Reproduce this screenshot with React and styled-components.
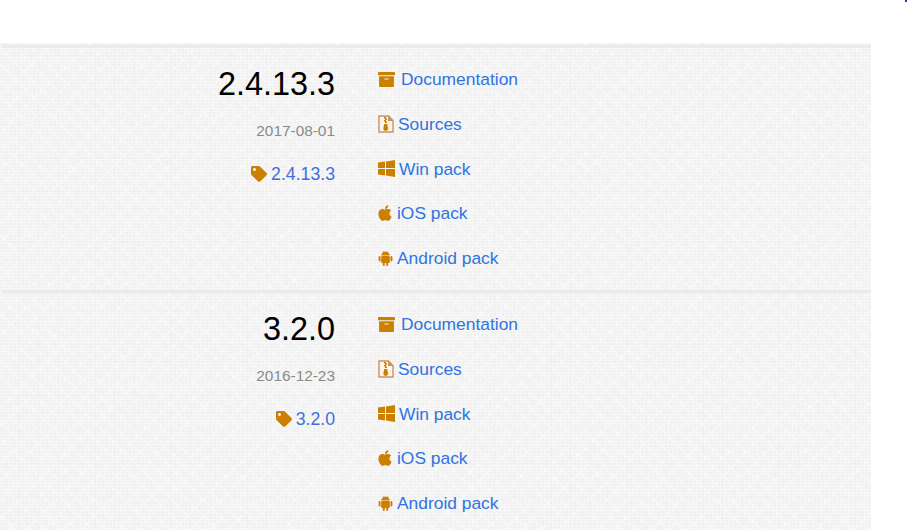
import React from "react";
import styled, { createGlobalStyle } from "styled-components";
import { FaArchive, FaApple, FaTag } from "react-icons/fa";

const GlobalStyle = createGlobalStyle`
  html, body {
    margin: 0;
    padding: 0;
    height: 100%;
    overflow: hidden;
    background: #fff;
    font-family: "Liberation Sans", Arial, sans-serif;
  }
`;

const Page = styled.div`
  padding-top: 43px;
  width: 871px;
`;

const Speck = styled.i`
  position: absolute;
  top: 0;
  left: 905px;
  width: 2px;
  height: 2px;
  background: #3030c0;
`;

const Panel = styled.section`
  height: 487px;
  overflow: hidden;
  padding-top: 2px;
  background-color: #f1f1f1;
  background-image:
    repeating-linear-gradient(0deg, rgba(255, 255, 255, 0.35) 0 1px, transparent 1px 3px),
    repeating-linear-gradient(90deg, rgba(255, 255, 255, 0.3) 0 1px, transparent 1px 4px),
    repeating-linear-gradient(0deg, rgba(232, 232, 232, 0.3) 0 1px, transparent 1px 17px),
    repeating-linear-gradient(90deg, rgba(232, 232, 232, 0.3) 0 1px, transparent 1px 19px),
    repeating-linear-gradient(45deg, rgba(255, 255, 255, 0.3) 0 2px, transparent 2px 11px),
    repeating-linear-gradient(-45deg, rgba(255, 255, 255, 0.25) 0 2px, transparent 2px 13px);
`;

const Release = styled.article`
  display: grid;
  grid-template-columns: 333px 1fr;
  column-gap: 43px;
  height: 242px;
  margin-left: 2px;
  border-top: 3px solid #ebebeb;
`;

const Meta = styled.div`
  display: flex;
  flex-direction: column;
  align-items: flex-end;
`;

const Version = styled.h2`
  margin: 15px 0 0;
  font-size: 32.4px;
  font-weight: 400;
  line-height: 42px;
  color: #000;
`;

const ReleaseDate = styled.div`
  margin-top: 17px;
  font-size: 15.4px;
  line-height: 18px;
  color: #8a8a8a;
`;

const TagLink = styled.a`
  display: flex;
  align-items: center;
  gap: 4px;
  margin-top: 24px;
  font-size: 17.7px;
  line-height: 20px;
  color: #3d6fe0;
  svg {
    width: 16px;
    height: 16px;
    color: #cc8000;
  }
`;

const Downloads = styled.ul`
  margin: 0;
  padding: 20px 0 0;
  list-style: none;
`;

const Download = styled.li`
  height: 44.8px;
  display: flex;
  align-items: flex-start;
`;

const DownloadLink = styled.a`
  display: flex;
  align-items: center;
  gap: ${(p) => p.$gap}px;
  font-size: 17.4px;
  line-height: 22px;
  color: #2f74e2;
  svg {
    width: ${(p) => p.$w}px;
    height: ${(p) => p.$h}px;
    color: #cc8000;
    flex: none;
  }
`;

const ZipIcon = () => (
  <svg viewBox="0 0 16 18">
    <path d="M1 1h9.5L15 5.5V17H1z" fill="#fdf6ee" stroke="#d0915c" strokeWidth="1.4" />
    <path d="M10 1v5h5z" fill="#d0915c" />
    <path d="M6 2h2v1.5H6zM7 3.5h2V5H7zM6 5h2v1.5H6zM7 6.5h2V8H7z" fill="#cc8000" />
    <path d="M6.2 9h3l.9 4.5a2.4 2.4 0 1 1-4.8 0z" fill="#cc8000" />
  </svg>
);

const WindowsIcon = () => (
  <svg viewBox="0 0 17 17" fill="currentColor">
    <path d="M0 2.5 7 1.5v6.4H0zM8 1.4 17 0v7.9H8zM0 8.9h7v6.5l-7-1zM8 8.9h9V17l-9-1.4z" />
  </svg>
);

const AndroidIcon = () => (
  <svg viewBox="0 0 15 16" fill="currentColor">
    <path d="M3.2 5.5a4.3 4.3 0 0 1 2-3.2L4.5 1l.4-.3.8 1.3a4.4 4.4 0 0 1 3.6 0L10.1.7l.4.3-.7 1.3a4.3 4.3 0 0 1 2 3.2z" />
    <rect x="3.2" y="6" width="8.6" height="7" rx="1" />
    <rect x="0.6" y="6" width="2" height="5.6" rx="1" />
    <rect x="12.4" y="6" width="2" height="5.6" rx="1" />
    <rect x="4.8" y="12" width="2" height="4" rx="1" />
    <rect x="8.2" y="12" width="2" height="4" rx="1" />
  </svg>
);

const links = [
  { label: "Documentation", Icon: FaArchive, w: 17, h: 17, gap: 6 },
  { label: "Sources", Icon: ZipIcon, w: 16, h: 18, gap: 4 },
  { label: "Win pack", Icon: WindowsIcon, w: 17, h: 17, gap: 4 },
  { label: "iOS pack", Icon: FaApple, w: 14, h: 18, gap: 5 },
  { label: "Android pack", Icon: AndroidIcon, w: 15, h: 16, gap: 4 },
];

const releases = [
  { version: "2.4.13.3", date: "2017-08-01" },
  { version: "3.2.0", date: "2016-12-23" },
];

export default function App() {
  return (
    <Page>
      <GlobalStyle />
      <Speck />
      <Panel>
        {releases.map((r) => (
          <Release key={r.version}>
            <Meta>
              <Version>{r.version}</Version>
              <ReleaseDate>{r.date}</ReleaseDate>
              <TagLink>
                <FaTag />
                {r.version}
              </TagLink>
            </Meta>
            <Downloads>
              {links.map(({ label, Icon, w, h, gap }) => (
                <Download key={label}>
                  <DownloadLink $w={w} $h={h} $gap={gap}>
                    <Icon />
                    {label}
                  </DownloadLink>
                </Download>
              ))}
            </Downloads>
          </Release>
        ))}
      </Panel>
    </Page>
  );
}
